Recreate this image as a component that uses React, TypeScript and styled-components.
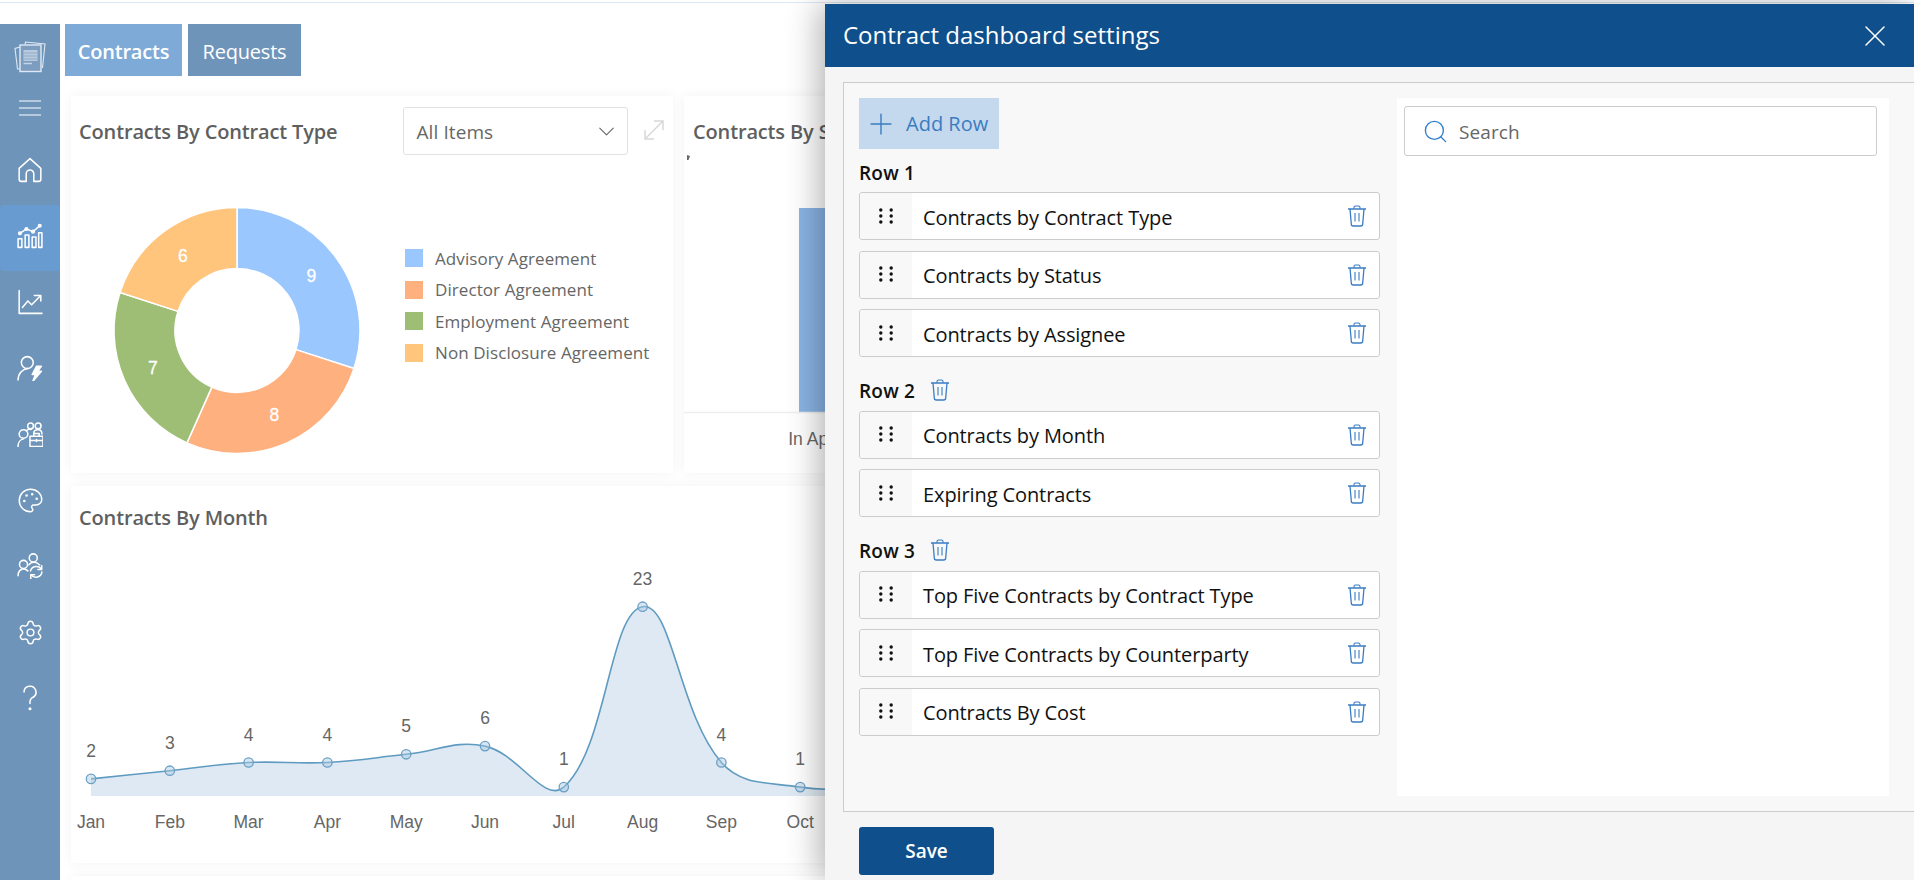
import * as React from "react";
import styled, { createGlobalStyle } from "styled-components";
import { ChevronDown, Palette, Plus, Search, Settings, X } from "lucide-react";

const GlobalStyle = createGlobalStyle`
    html, body {
        margin: 0;
        padding: 0;
        background: #fff;
        font-family: "Open Sans", "Noto Sans", sans-serif;
    }
    * {
        box-sizing: border-box;
    }
`;

const Page = styled.div`
    position: relative;
    width: 1914px;
    height: 880px;
    overflow: hidden;
    background: #fff;
`;

const TopStrip = styled.div`
    height: 3px;
    border-bottom: 1px solid #dce8f4;
    margin-bottom: 21px;
`;

const Shell = styled.div`
    display: flex;
    height: 856px;
`;

const Sidebar = styled.nav`
    flex: 0 0 60px;
    display: flex;
    flex-direction: column;
    background: #6f94ba;
    color: #fff;
`;

const LogoSlot = styled.div`
    height: 58px;
    padding-top: 8px;
    display: flex;
    align-items: center;
    justify-content: center;
`;

const MenuSlot = styled.div`
    height: 50px;
    padding-top: 2px;
    margin-bottom: 7px;
    display: flex;
    align-items: center;
    justify-content: center;
`;

const NavItem = styled.div<{ $active?: boolean }>`
    height: 66px;
    padding-bottom: 4px;
    display: flex;
    align-items: center;
    justify-content: center;
    border-radius: 4px;
    background: ${(p) => (p.$active ? "#689bcf" : "transparent")};
`;

const Main = styled.main`
    flex: 1;
    min-width: 0;
`;

const Tabs = styled.div`
    display: flex;
    gap: 6px;
    padding-left: 5px;
    margin-bottom: 20px;
`;

const Tab = styled.div<{ $active?: boolean; $width: number }>`
    width: ${(p) => p.$width}px;
    height: 52px;
    padding-top: 2px;
    display: flex;
    align-items: center;
    justify-content: center;
    color: #fff;
    font-size: 20px;
    letter-spacing: -0.2px;
    font-weight: ${(p) => (p.$active ? 600 : 400)};
    background: ${(p) => (p.$active ? "#7eaad7" : "#6f94ba")};
`;

const Board = styled.div`
    display: grid;
    grid-template-columns: 602px 620px;
    grid-auto-rows: 377px;
    gap: 13px 11px;
    padding-left: 11px;
`;

const Card = styled.section<{ $wide?: boolean }>`
    background: #fff;
    box-shadow: 0 0 12px rgba(0, 0, 0, 0.05);
    grid-column: ${(p) => (p.$wide ? "1 / span 2" : "auto")};
`;

const CardHead = styled.div`
    height: 59px;
    padding: 11px 0 0 8px;
    display: flex;
    align-items: flex-start;
`;

const CardTitle = styled.h2`
    margin: 0;
    height: 48px;
    line-height: 50px;
    font-size: 20px;
    font-weight: 600;
    letter-spacing: -0.15px;
    color: #5f5f5f;
    white-space: nowrap;
`;

const StatusTitle = styled(CardTitle)`
    margin-left: 1px;
`;

const MonthHead = styled.div`
    height: 47px;
    padding: 7px 0 0 8px;
`;

const Dropdown = styled.div`
    margin-left: 66px;
    width: 225px;
    height: 48px;
    display: flex;
    align-items: center;
    justify-content: space-between;
    padding: 1px 7px 0 12px;
    border: 1px solid #e2e2e2;
    border-radius: 3px;
    font-size: 19px;
    letter-spacing: 0.1px;
    color: #666;
`;

const ExpandSlot = styled.div`
    margin: 13px 0 0 16px;
    color: #d8d8d8;
    line-height: 0;
`;

const PieBody = styled.div`
    display: flex;
    align-items: flex-start;
`;

const PieChart = styled.svg`
    display: block;
    margin: 51px 0 0 41px;
`;

const Legend = styled.ul`
    list-style: none;
    margin: 94px 0 0 43px;
    padding: 0;
    display: flex;
    flex-direction: column;
    gap: 13.6px;
`;

const LegendRow = styled.li`
    height: 18px;
    display: flex;
    align-items: center;
    gap: 12px;
    font-size: 17px;
    letter-spacing: 0.08px;
    color: #666;
    white-space: nowrap;
`;

const Swatch = styled.span<{ $color: string }>`
    width: 18px;
    height: 18px;
    background: ${(p) => p.$color};
`;

const ChartSvg = styled.svg`
    display: block;
    overflow: hidden;
`;

const ChartText = styled.text`
    font-family: "Liberation Sans", Arial, sans-serif;
    font-size: 17.5px;
    fill: #666;
    text-anchor: middle;
`;

const SliceLabel = styled.text`
    font-family: "Liberation Sans", Arial, sans-serif;
    font-size: 17.5px;
    fill: #fff;
    stroke: #fff;
    stroke-width: 0.3px;
    text-anchor: middle;
    dominant-baseline: central;
`;

const Panel = styled.aside`
    position: absolute;
    top: 4px;
    left: 825px;
    right: 0;
    bottom: 0;
    display: flex;
    flex-direction: column;
    background: #f5f5f5;
    box-shadow: -6px 0 30px rgba(0, 0, 0, 0.3);
`;

const PanelHead = styled.header`
    flex: 0 0 63px;
    display: flex;
    align-items: center;
    justify-content: space-between;
    padding: 0 21px 0 18px;
    background: #0f4f8b;
    color: #fff;
`;

const PanelTitle = styled.h1`
    margin: 0 0 2px;
    font-size: 24px;
    font-weight: 400;
`;

const Workspace = styled.div`
    margin: 15px 0 0 18px;
    height: 730px;
    display: flex;
    align-items: stretch;
    gap: 17.5px;
    padding: 15px 25px 15px 15px;
    background: #f8f8f8;
    border: 1px solid #ccc;
    border-right: none;
`;

const RowsColumn = styled.div`
    flex: 0 0 520.5px;
`;

const AddRow = styled.button`
    width: 140px;
    height: 51px;
    display: flex;
    align-items: center;
    gap: 8px;
    padding: 0 0 0 5px;
    margin-bottom: 8.5px;
    border: none;
    background: #c4d9ee;
    color: #3b7cc0;
    font-family: inherit;
    font-size: 20px;
    white-space: nowrap;
`;

const RowGroup = styled.div`
    margin-bottom: 19px;
`;

const RowHeading = styled.div`
    height: 28px;
    margin-bottom: 6.5px;
    display: flex;
    align-items: center;
    gap: 15px;
`;

const RowLabel = styled.span`
    padding-top: 2px;
    font-size: 19px;
    font-weight: 600;
    letter-spacing: 0.2px;
    color: #111;
`;

const WidgetList = styled.div`
    display: flex;
    flex-direction: column;
    gap: 10.5px;
`;

const Widget = styled.div`
    height: 48px;
    display: flex;
    align-items: center;
    padding-right: 12px;
    background: #fff;
    border: 1px solid #ccc;
    border-radius: 3px;
`;

const DragHandle = styled.div`
    flex: 0 0 52px;
    align-self: stretch;
    display: flex;
    align-items: center;
    justify-content: center;
    padding-bottom: 1px;
    background: #f8f8f8;
    border-radius: 3px 0 0 3px;
`;

const WidgetName = styled.span`
    flex: 1;
    padding: 2px 0 0 11px;
    font-size: 20px;
    letter-spacing: -0.1px;
    color: #111;
    white-space: nowrap;
`;

const CatalogPane = styled.div`
    flex: 0 0 492px;
    padding: 8px 12px 0 7px;
    background: #fff;
`;

const SearchBox = styled.div`
    height: 50px;
    display: flex;
    align-items: center;
    gap: 10px;
    padding-left: 17px;
    background: #fff;
    border: 1px solid #ccc;
    border-radius: 3px;
`;

const SearchLabel = styled.span`
    padding-top: 2px;
    color: #666;
    font-size: 19px;
    letter-spacing: 0.1px;
`;

const SearchGlyph = styled.span`
    color: #2f7fd0;
    line-height: 0;
`;

const PanelFoot = styled.footer`
    padding: 15px 0 0 34px;
`;

const SaveButton = styled.button`
    width: 135px;
    height: 48px;
    border: none;
    border-radius: 3px;
    background: #0f4f8b;
    color: #fff;
    font-family: inherit;
    font-size: 19px;
    font-weight: 600;
`;

const line = { fill: "none", stroke: "currentColor", strokeWidth: 1.4, strokeLinecap: "round", strokeLinejoin: "round" } as const;

const NavSvg: React.FC<{ children: React.ReactNode }> = ({ children }) => (
    <svg width="26" height="26" viewBox="0 0 24 24" {...line}>
        {children}
    </svg>
);

const LogoIcon = () => (
    <svg width="32" height="32" viewBox="0 0 32 32" fill="none" stroke="#dfe8f2" strokeWidth="1.1">
        <path d="M6 6 L1 7.500 L3.500 28 L7 28" />
        <path d="M11 3.500 L11.500 1 L31 3 L28.500 27" />
        <rect x="6" y="4" width="21" height="26.500" fill="#7c9dc0" strokeWidth="1.400" />
        <rect x="9.500" y="9" width="14" height="11" fill="#b9cbde" stroke="none" />
        <path d="M9.500 12H23.500M9.500 15H23.500M9.500 18H23.500" stroke="#8fabc8" strokeWidth="1" />
        <path d="M9.500 22.500H18" stroke="#c6d5e4" strokeWidth="1.500" />
    </svg>
);

const MenuIcon = () => (
    <svg width="22" height="16" viewBox="0 0 22 16" stroke="#fff" strokeWidth="1.1">
        <path d="M0 1H22M0 8H22M0 15H22" />
    </svg>
);

const HomeIcon = () => (
    <NavSvg>
        <path d="M2 10.500 L12 1.500 L22 10.500 V20.500 a2 2 0 0 1 -2 2 H15.500 V15.500 a3.500 3.500 0 0 0 -7 0 V22.500 H4 a2 2 0 0 1 -2 -2 Z" />
    </NavSvg>
);

const BarsIcon = () => (
    <NavSvg>
        <rect x="1" y="14.500" width="3.500" height="8" />
        <rect x="7.500" y="11" width="3.500" height="11.500" />
        <rect x="14" y="13" width="3.500" height="9.500" />
        <rect x="20" y="9" width="3" height="13.500" />
        <path d="M2.700 9.500 L8.700 5.500 L14.800 8 L21 2.500" />
        <circle cx="2.700" cy="9.500" r="1.200" />
        <circle cx="8.700" cy="5.500" r="1.200" />
        <circle cx="14.800" cy="8" r="1.200" />
        <circle cx="21" cy="2.500" r="1.200" />
    </NavSvg>
);

const TrendIcon = () => (
    <NavSvg>
        <path d="M2 1.500 V22.500 H23" />
        <path d="M5 17 L10 11 L13.500 14.500 L21.500 6.500" />
        <path d="M16 6 H22 V11" />
    </NavSvg>
);

const UserBoltIcon = () => (
    <NavSvg>
        <circle cx="9.500" cy="7" r="5.500" />
        <path d="M1 23 C1 17 5 13 10 12.500" />
        <path d="M18 10.500 L14 18 H17 L14.500 24.500 L22.500 15 H19 L22.500 10.500 Z" fill="#fff" />
    </NavSvg>
);

const UsersCaseIcon = () => (
    <NavSvg>
        <circle cx="6" cy="12" r="4" />
        <path d="M1 23.500 C1 20 3 17 6 16.500" />
        <circle cx="12.500" cy="4.500" r="2.700" />
        <circle cx="19.500" cy="4.500" r="2.700" />
        <path d="M15.500 11 C15.500 9 17 8 19.500 8 C22 8 23 10 23 12" />
        <path d="M8.500 9 C9.500 8 11 7.500 13 7.800" />
        <rect x="12" y="14" width="12" height="9.500" fill="#6f94ba" />
        <path d="M15.500 14 V11.500 H20.500 V14 M12 18 H24 M18 17 V19" />
    </NavSvg>
);

const UsersRefreshIcon = () => (
    <NavSvg>
        <circle cx="15" cy="4.500" r="3.700" />
        <circle cx="6" cy="10.500" r="3.700" />
        <path d="M1 21 C1 17 3 15 6 14.500 C8 14.800 9 15.500 10 16.500" />
        <path d="M11 11 C12 9.500 13.500 8.500 15.500 8.500 C18 8.500 20 10 21 11" />
        <path d="M12.500 16.500 A5.500 5.500 0 0 1 22.500 15 M23 17.500 A5.500 5.500 0 0 1 13 20" />
        <path d="M22.800 11.800 V15.300 H19.300 M12.700 23.500 V20 H16.200" />
    </NavSvg>
);

const HelpIcon = () => (
    <NavSvg>
        <path d="M6.500 6.500 A5.500 5.500 0 1 1 14.500 11.500 C12.800 12.500 12 13.500 12 15.500 V17" />
        <circle cx="12" cy="22" r="0.700" fill="#fff" />
    </NavSvg>
);

const ExpandIcon = () => (
    <svg width="20" height="20" viewBox="0 0 20 20" fill="none" stroke="currentColor" strokeWidth="1.5">
        <path d="M1 19 L19 1 M10 1 H19 V10 M1 10 V19 H10" />
    </svg>
);

const TrashIcon = () => (
    <svg width="20" height="22" viewBox="0 0 20 22" fill="none" stroke="#3a7cc4" strokeWidth="1.1" strokeLinejoin="round">
        <path d="M1 4 H19" strokeWidth="1.500" />
        <path d="M7 3.800 V2.500 a1.500 1.500 0 0 1 1.500 -1.500 h3 a1.500 1.500 0 0 1 1.500 1.500 V3.800" />
        <path d="M3 4 L4.300 19 a2 2 0 0 0 2 2 h7.400 a2 2 0 0 0 2 -2 L17 4" strokeWidth="1.300" />
        <path d="M8 8 V16.500 M12 8 V16.500" />
    </svg>
);

const DotsIcon = () => (
    <svg width="14" height="16" viewBox="0 0 14 16" fill="#111">
        {[2, 8, 14].map((cy) => (
            <React.Fragment key={cy}>
                <circle cx="1.800" cy={cy} r="1.700" />
                <circle cx="12.200" cy={cy} r="1.700" />
            </React.Fragment>
        ))}
    </svg>
);

const slices = [
    { label: "Advisory Agreement", value: 9, color: "#9bc7ff" },
    { label: "Director Agreement", value: 8, color: "#ffb07f" },
    { label: "Employment Agreement", value: 7, color: "#9dbe74" },
    { label: "Non Disclosure Agreement", value: 6, color: "#ffc57c" },
];

const polar = (r: number, deg: number): [number, number] => {
    const a = (deg * Math.PI) / 180;
    return [125 + r * Math.sin(a), 124.5 - r * Math.cos(a)];
};

const Donut: React.FC = () => {
    const total = slices.reduce((sum, s) => sum + s.value, 0);
    let start = 0;
    return (
        <PieChart width="250" height="250" viewBox="0 0 250 250">
            {slices.map((s) => {
                const sweep = (s.value / total) * 360;
                const end = start + sweep;
                const [x1, y1] = polar(123, start);
                const [x2, y2] = polar(123, end);
                const [x3, y3] = polar(62, end);
                const [x4, y4] = polar(62, start);
                const [lx, ly] = polar(92, start + sweep / 2);
                start = end;
                return (
                    <g key={s.label}>
                        <path
                            d={`M${x1} ${y1} A123 123 0 0 1 ${x2} ${y2} L${x3} ${y3} A62 62 0 0 0 ${x4} ${y4} Z`}
                            fill={s.color}
                            stroke="#fff"
                            strokeWidth="1.5"
                        />
                        <SliceLabel x={lx} y={ly}>
                            {s.value}
                        </SliceLabel>
                    </g>
                );
            })}
        </PieChart>
    );
};

const months = ["Jan", "Feb", "Mar", "Apr", "May", "Jun", "Jul", "Aug", "Sep", "Oct", "Nov", "Dec"];
const counts = [2, 3, 4, 4, 5, 6, 1, 23, 4, 1, 1, 1];

const points = counts.map((c, i) => ({
    x: 20 + i * 78.8,
    y: 262.3 - c * 8.2,
}));

// same bezier spline that the chart library draws, tension 0.4
const splinePath = () => {
    const t = 0.4;
    const cps = points.map((cur, i) => {
        const prev = points[i - 1] ?? cur;
        const next = points[i + 1] ?? cur;
        const d01 = Math.hypot(cur.x - prev.x, cur.y - prev.y);
        const d12 = Math.hypot(next.x - cur.x, next.y - cur.y);
        const sum = d01 + d12 || 1;
        const dx = next.x - prev.x;
        const dy = next.y - prev.y;
        return {
            inX: cur.x - (t * d01 * dx) / sum,
            inY: cur.y - (t * d01 * dy) / sum,
            outX: cur.x + (t * d12 * dx) / sum,
            outY: cur.y + (t * d12 * dy) / sum,
        };
    });
    let d = `M${points[0].x} ${points[0].y}`;
    for (let i = 1; i < points.length; i++) {
        d += ` C${cps[i - 1].outX} ${cps[i - 1].outY} ${cps[i].inX} ${cps[i].inY} ${points[i].x} ${points[i].y}`;
    }
    return d;
};

const MonthChart: React.FC = () => {
    const curve = splinePath();
    const baseline = 263;
    const lastX = points[points.length - 1].x;
    return (
        <ChartSvg width="1233" height="330" viewBox="0 0 1233 330">
            <path d={`${curve} L${lastX} ${baseline} L${points[0].x} ${baseline} Z`} fill="#dfe9f3" />
            <path d={curve} fill="none" stroke="#5f9bc1" strokeWidth="1.6" />
            {points.map((p, i) => (
                <g key={months[i]}>
                    <circle cx={p.x} cy={p.y} r="4.700" fill="#a9c8df" fillOpacity="0.45" stroke="#6ba0c6" strokeWidth="1.3" />
                    <ChartText x={p.x} y={p.y - 22}>
                        {counts[i]}
                    </ChartText>
                    <ChartText x={p.x} y={295}>
                        {months[i]}
                    </ChartText>
                </g>
            ))}
        </ChartSvg>
    );
};

const StatusChart: React.FC = () => (
    <ChartSvg width="620" height="318" viewBox="0 0 620 318">
        <path d="M3 0 L6 1 L4.500 5 L3 5 Z" fill="#666" />
        <rect x="115" y="53" width="120" height="204" fill="#8ab4e5" />
        <path d="M0 257.500 H620" stroke="#eee" strokeWidth="1.500" />
        <ChartText x="148" y="290">
            In Approval
        </ChartText>
    </ChartSvg>
);

const rows = [
    { name: "Row 1", removable: false, widgets: ["Contracts by Contract Type", "Contracts by Status", "Contracts by Assignee"] },
    { name: "Row 2", removable: true, widgets: ["Contracts by Month", "Expiring Contracts"] },
    { name: "Row 3", removable: true, widgets: ["Top Five Contracts by Contract Type", "Top Five Contracts by Counterparty", "Contracts By Cost"] },
];

const SettingsPanel: React.FC = () => (
    <Panel>
        <PanelHead>
            <PanelTitle>Contract dashboard settings</PanelTitle>
            <X size={36} strokeWidth={1} />
        </PanelHead>
        <Workspace>
            <RowsColumn>
                <AddRow>
                    <Plus size={34} strokeWidth={1} />
                    Add Row
                </AddRow>
                {rows.map((row) => (
                    <RowGroup key={row.name}>
                        <RowHeading>
                            <RowLabel>{row.name}</RowLabel>
                            {row.removable && <TrashIcon />}
                        </RowHeading>
                        <WidgetList>
                            {row.widgets.map((w) => (
                                <Widget key={w}>
                                    <DragHandle>
                                        <DotsIcon />
                                    </DragHandle>
                                    <WidgetName>{w}</WidgetName>
                                    <TrashIcon />
                                </Widget>
                            ))}
                        </WidgetList>
                    </RowGroup>
                ))}
            </RowsColumn>
            <CatalogPane>
                <SearchBox>
                    <SearchGlyph>
                        <Search size={27} strokeWidth={1.2} />
                    </SearchGlyph>
                    <SearchLabel>Search</SearchLabel>
                </SearchBox>
            </CatalogPane>
        </Workspace>
        <PanelFoot>
            <SaveButton>Save</SaveButton>
        </PanelFoot>
    </Panel>
);

const App: React.FC = () => (
    <Page>
        <GlobalStyle />
        <TopStrip />
        <Shell>
            <Sidebar>
                <LogoSlot>
                    <LogoIcon />
                </LogoSlot>
                <MenuSlot>
                    <MenuIcon />
                </MenuSlot>
                <NavItem>
                    <HomeIcon />
                </NavItem>
                <NavItem $active>
                    <BarsIcon />
                </NavItem>
                <NavItem>
                    <TrendIcon />
                </NavItem>
                <NavItem>
                    <UserBoltIcon />
                </NavItem>
                <NavItem>
                    <UsersCaseIcon />
                </NavItem>
                <NavItem>
                    <Palette size={27} strokeWidth={1.3} />
                </NavItem>
                <NavItem>
                    <UsersRefreshIcon />
                </NavItem>
                <NavItem>
                    <Settings size={27} strokeWidth={1.3} />
                </NavItem>
                <NavItem>
                    <HelpIcon />
                </NavItem>
            </Sidebar>
            <Main>
                <Tabs>
                    <Tab $active $width={117}>
                        Contracts
                    </Tab>
                    <Tab $width={113}>Requests</Tab>
                </Tabs>
                <Board>
                    <Card>
                        <CardHead>
                            <CardTitle>Contracts By Contract Type</CardTitle>
                            <Dropdown>
                                All Items
                                <ChevronDown size={27} strokeWidth={1} />
                            </Dropdown>
                            <ExpandSlot>
                                <ExpandIcon />
                            </ExpandSlot>
                        </CardHead>
                        <PieBody>
                            <Donut />
                            <Legend>
                                {slices.map((s) => (
                                    <LegendRow key={s.label}>
                                        <Swatch $color={s.color} />
                                        {s.label}
                                    </LegendRow>
                                ))}
                            </Legend>
                        </PieBody>
                    </Card>
                    <Card>
                        <CardHead>
                            <StatusTitle>Contracts By Status</StatusTitle>
                        </CardHead>
                        <StatusChart />
                    </Card>
                    <Card $wide>
                        <MonthHead>
                            <CardTitle>Contracts By Month</CardTitle>
                        </MonthHead>
                        <MonthChart />
                    </Card>
                    <Card $wide />
                </Board>
            </Main>
        </Shell>
        <SettingsPanel />
    </Page>
);

export default App;
